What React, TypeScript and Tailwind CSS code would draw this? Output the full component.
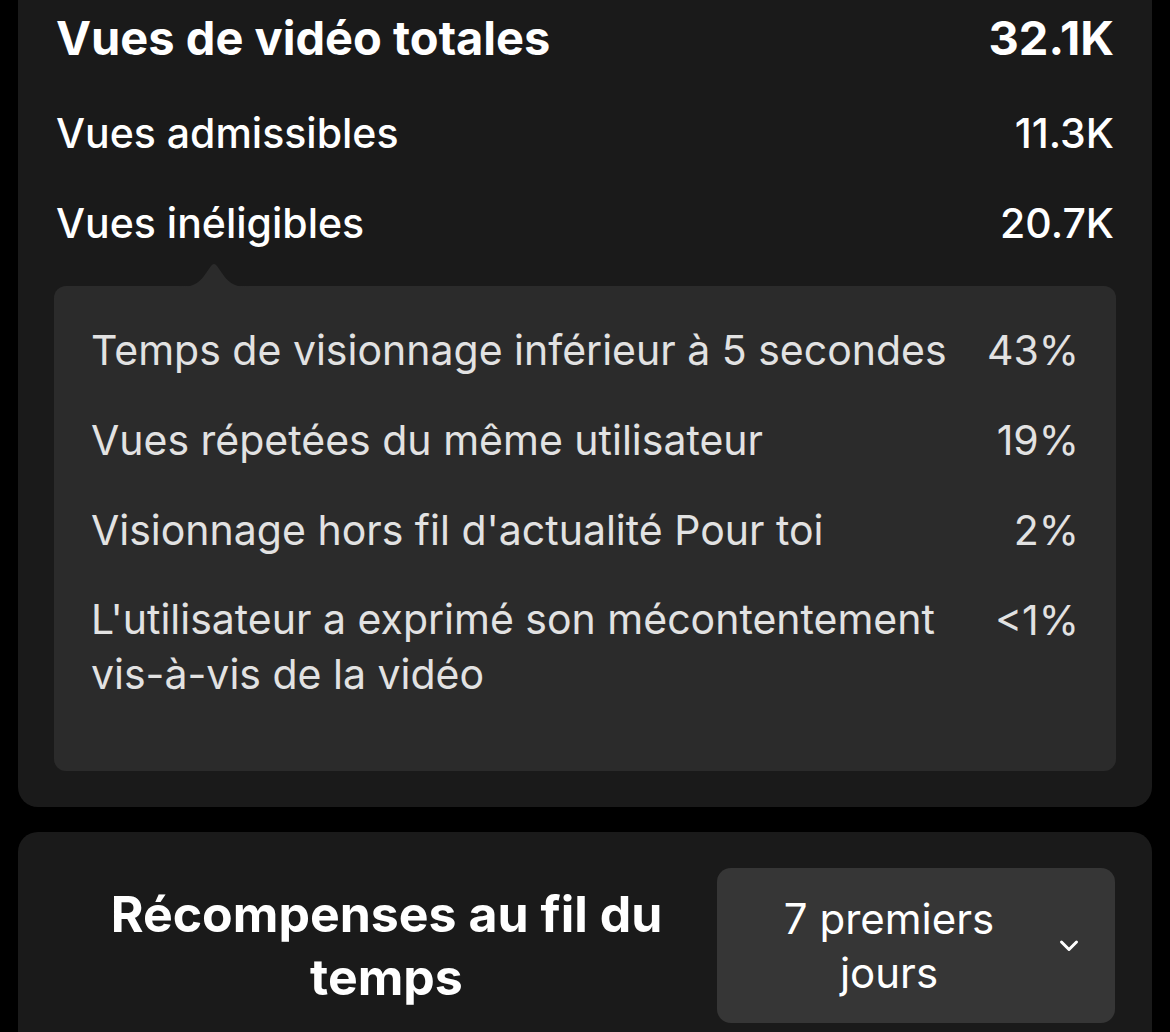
import React from "react";

const rows: { label: React.ReactNode; value: string }[] = [
  { label: "Temps de visionnage inférieur à 5 secondes", value: "43%" },
  { label: "Vues répetées du même utilisateur", value: "19%" },
  { label: "Visionnage hors fil d'actualité Pour toi", value: "2%" },
  {
    label: (
      <>
        L'utilisateur a exprimé son mécontentement
        <br />
        vis-à-vis de la vidéo
      </>
    ),
    value: "<1%",
  },
];

export default function App() {
  return (
    <div className="min-h-[1032px] h-[1032px] overflow-hidden bg-black px-[18px] font-['Inter','Noto_Sans',sans-serif] text-white">
      {/* Card 1 */}
      <div className="rounded-b-[20px] bg-[#1a1a1a] px-[38px] pt-[10px] pb-[36px]">
        <div className="flex h-[56px] items-center justify-between text-[47px] font-bold leading-[56px]">
          <span>Vues de vidéo totales</span>
          <span>32.1K</span>
        </div>
        <div className="mt-[39px] flex h-[56px] items-center justify-between text-[41px] font-medium leading-[56px]">
          <span>Vues admissibles</span>
          <span>11.3K</span>
        </div>
        <div className="mt-[34px] flex h-[56px] items-center justify-between text-[41px] font-medium leading-[56px]">
          <span>Vues inéligibles</span>
          <span>20.7K</span>
        </div>

        <div className="relative -mx-[2px] mt-[35px] rounded-[12px] bg-[#2b2b2b] px-[37px] pt-[36px] pb-[69px] text-[#e2e2e2]">
          <svg
            className="absolute -top-[24px] left-[124px]"
            width="72"
            height="25"
            viewBox="0 0 72 25"
          >
            <path
              d="M0 25 C14 25 20 22 26 14 L33 4 Q36 0 39 4 L46 14 C52 22 58 25 72 25 Z"
              fill="#2b2b2b"
            />
          </svg>
          <div className="flex flex-col gap-[34px]">
            {rows.map((r, i) => (
              <div
                key={i}
                className="flex items-start justify-between text-[41px] leading-[56px]"
              >
                <span className={i === 3 ? "leading-[55px]" : ""}>{r.label}</span>
                <span>{r.value}</span>
              </div>
            ))}
          </div>
        </div>
      </div>

      {/* Card 2 */}
      <div className="mt-[25px] rounded-[20px] bg-[#1a1a1a] pt-[36px] pr-[37px] pl-[38px] pb-[40px]">
        <div className="flex items-center">
          <div className="flex-1 text-center text-[50px] font-bold leading-[63px]">
            Récompenses au fil du
            <br />
            temps
          </div>
          <div className="flex h-[155px] w-[398px] items-center rounded-[14px] bg-[#363636] pl-[24px] pr-[36px]">
            <div className="flex-1 text-center text-[42px] leading-[54px]">
              7 premiers
              <br />
              jours
            </div>
            <svg
              className="ml-[22px]"
              width="20"
              height="13"
              viewBox="0 0 20 13"
              fill="none"
            >
              <path
                d="M2.5 3 L10 10.5 L17.5 3"
                stroke="white"
                strokeWidth="3"
                strokeLinecap="round"
                strokeLinejoin="round"
              />
            </svg>
          </div>
        </div>
      </div>
    </div>
  );
}
